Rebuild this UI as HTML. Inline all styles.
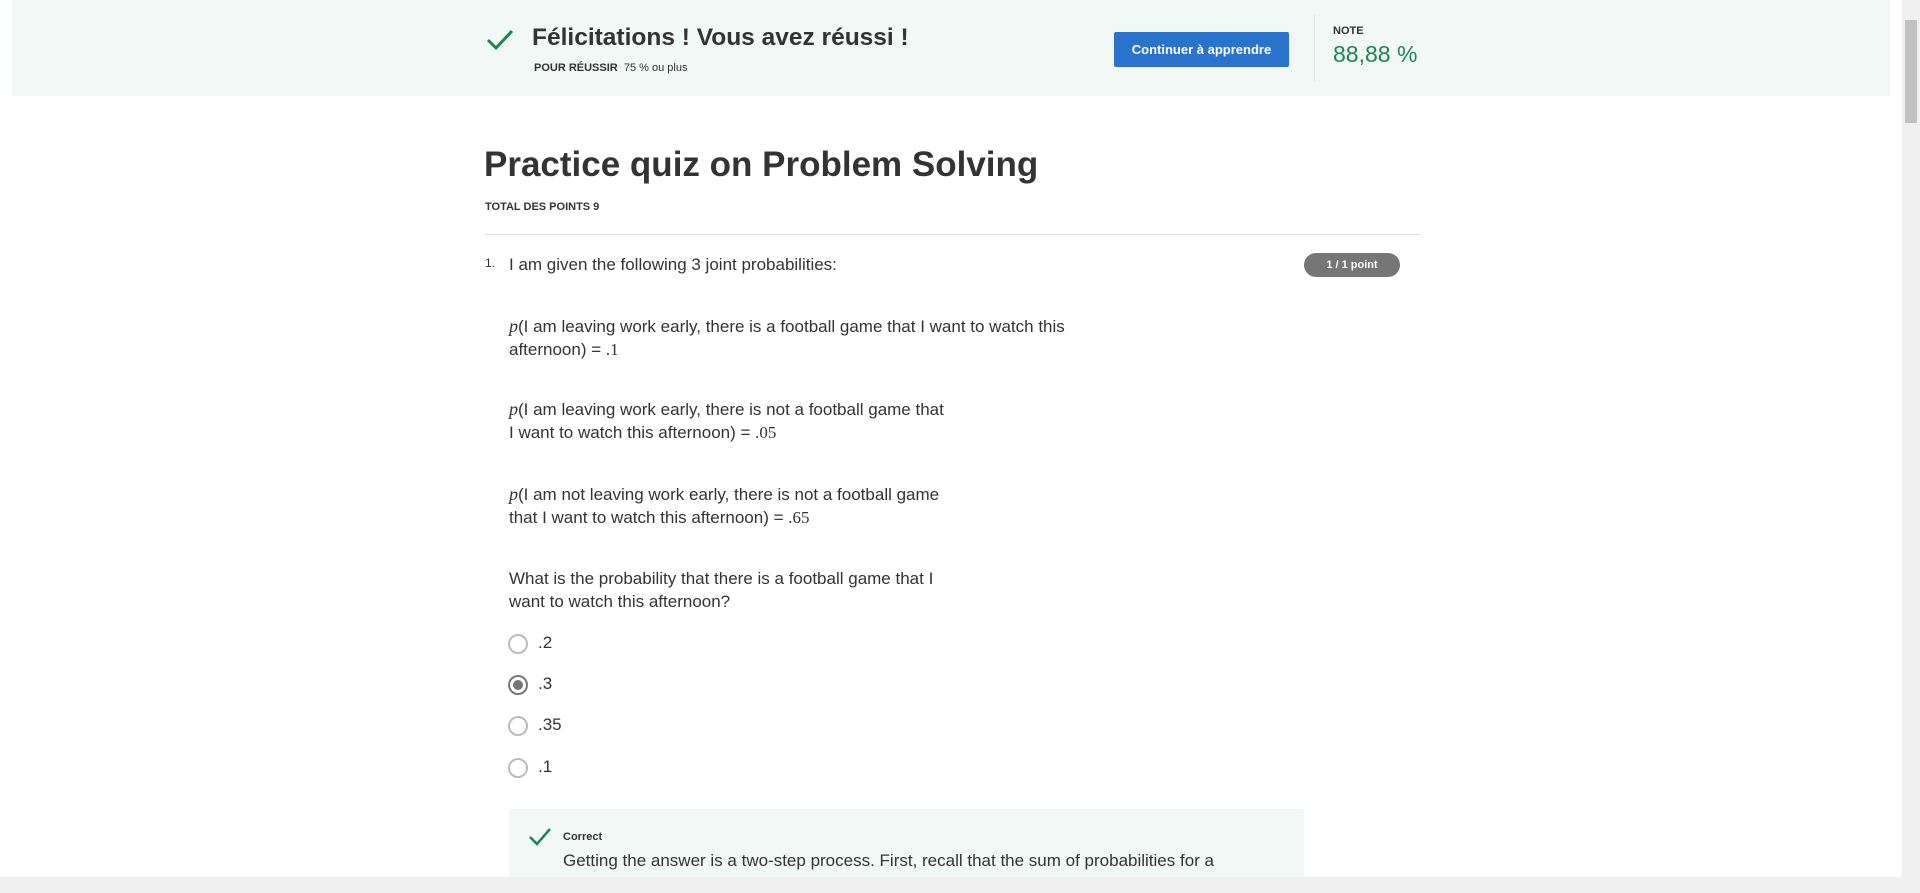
<!DOCTYPE html>
<html><head><meta charset="utf-8"><style>
*{margin:0;padding:0;box-sizing:border-box}
body{width:1920px;height:893px;overflow:hidden;background:#fff;font-family:"Liberation Sans",sans-serif;color:#1f1f1f;position:relative}
.a{position:absolute;white-space:nowrap}
.banner{position:absolute;left:12px;top:0;width:1878px;height:96px;background:#f2f8f5}
.p{font-size:17px;line-height:23px;color:#333}
.m{font-family:"Liberation Serif",serif;font-style:italic;font-size:18px}
.n{font-family:"Liberation Serif",serif;font-size:17px}
.r{position:absolute;left:508px;width:20px;height:20px;border:2px solid #bbb;border-radius:50%}
.rl{position:absolute;left:538px;font-size:17px;color:#333}
</style></head><body>
<div class="banner"></div>
<svg class="a" style="left:486px;top:28px" width="28" height="24" viewBox="0 0 28 24"><path d="M2 12 L10 20 L26 3" fill="none" stroke="#1f8354" stroke-width="3"/></svg>
<div class="a" style="left:532px;top:24px;font-size:24.5px;font-weight:bold;color:#333">Félicitations ! Vous avez réussi !</div>
<div class="a" style="left:534px;top:62px;font-size:11px;color:#333"><b>POUR RÉUSSIR</b>&nbsp; 75 % ou plus</div>
<div class="a" style="left:1114px;top:32px;width:175px;height:35px;background:#2a73cc;color:#fff;font-size:13px;font-weight:bold;text-align:center;line-height:35px;border-radius:2px">Continuer à apprendre</div>
<div class="a" style="left:1314px;top:15px;width:1px;height:66px;background:#dde3e0"></div>
<div class="a" style="left:1333px;top:25px;font-size:11px;font-weight:bold;color:#333">NOTE</div>
<div class="a" style="left:1333px;top:41px;font-size:23px;color:#1f8354">88,88 %</div>
<div class="a" style="left:484px;top:145px;font-size:35px;font-weight:bold;color:#333">Practice quiz on Problem Solving</div>
<div class="a" style="left:485px;top:201px;font-size:11px;font-weight:bold;color:#333">TOTAL DES POINTS 9</div>
<div class="a" style="left:485px;top:234px;width:935px;height:1px;background:#ddd"></div>
<div class="a" style="left:485px;top:256px;font-size:12px;color:#333">1.</div>
<div class="a p" style="left:509px;top:253px">I am given the following 3 joint probabilities:</div>
<div class="a" style="left:1304px;top:253px;width:96px;height:24px;background:#767676;border-radius:12px;color:#fff;font-size:11px;font-weight:bold;text-align:center;line-height:24px">1 / 1 point</div>
<div class="a p" style="left:509px;top:315px"><span class="m">p</span>(I am leaving work early, there is a football game that I want to watch this<br>afternoon) = <span class="n">.1</span></div>
<div class="a p" style="left:509px;top:398px"><span class="m">p</span>(I am leaving work early, there is not a football game that<br>I want to watch this afternoon) = <span class="n">.05</span></div>
<div class="a p" style="left:509px;top:483px"><span class="m">p</span>(I am not leaving work early, there is not a football game<br>that I want to watch this afternoon) = <span class="n">.65</span></div>
<div class="a p" style="left:509px;top:567px">What is the probability that there is a football game that I<br>want to watch this afternoon?</div>
<div class="r" style="top:634px"></div><div class="rl" style="top:633px">.2</div>
<div class="r" style="top:675px;border-color:#777"><div style="width:10px;height:10px;margin:3px;border-radius:50%;background:#777"></div></div><div class="rl" style="top:674px">.3</div>
<div class="r" style="top:716px"></div><div class="rl" style="top:715px">.35</div>
<div class="r" style="top:758px"></div><div class="rl" style="top:757px">.1</div>
<div class="a" style="left:509px;top:809px;width:795px;height:84px;background:#f2f8f5"></div>
<svg class="a" style="left:528px;top:826px" width="24" height="22" viewBox="0 0 24 22"><path d="M2 11 L9 18 L22 3" fill="none" stroke="#1f8354" stroke-width="2.5"/></svg>
<div class="a" style="left:563px;top:831px;font-size:11px;font-weight:bold;color:#333">Correct</div>
<div class="a" style="left:563px;top:851px;font-size:17px;color:#333">Getting the answer is a two-step process. First, recall that the sum of probabilities for a</div>
<div class="a" style="left:0;top:877px;width:1902px;height:16px;background:#f0f0f0"></div>
<div class="a" style="left:1902px;top:0;width:18px;height:893px;background:#f0f0f0"></div>
<div class="a" style="left:1905px;top:20px;width:12px;height:103px;background:#c1c1c1"></div>
</body></html>
